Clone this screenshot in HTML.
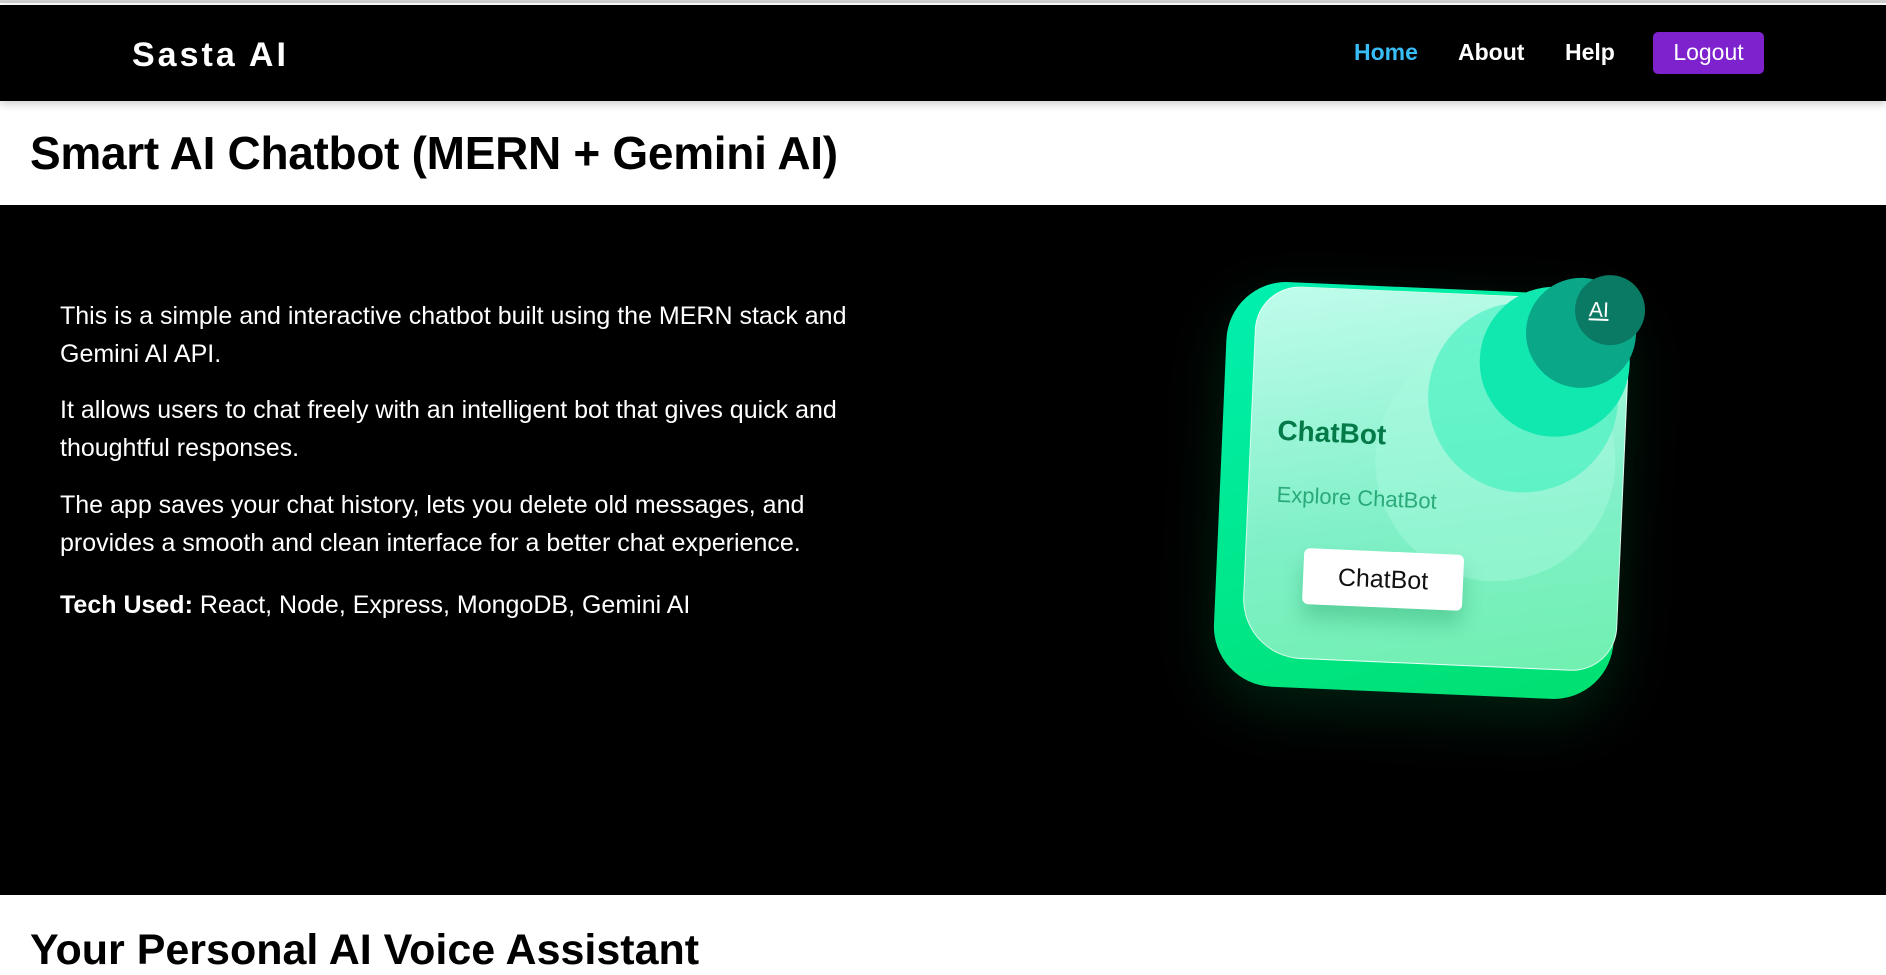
<!DOCTYPE html>
<html><head><meta charset="utf-8"><style>
*{margin:0;padding:0;box-sizing:border-box}
body{width:1886px;height:971px;overflow:hidden;background:#fff;font-family:"Liberation Sans",sans-serif;position:relative}
.topline{position:absolute;top:0;left:0;width:1886px;height:5px;background:#fff;border-top:3px solid #cfcfcf}
nav{position:absolute;top:5px;left:0;width:1886px;height:96px;background:#000;box-shadow:0 3px 8px rgba(0,0,0,.2)}
.logo{position:absolute;left:132px;top:31px;color:#fff;font-weight:bold;font-size:34px;letter-spacing:3px}
.nl{position:absolute;top:34px;font-weight:bold;font-size:23px;color:#fff}
.btn{position:absolute;left:1653px;top:27px;width:111px;height:42px;background:#7e22ce;border-radius:5px;color:#fff;font-size:23px;text-align:center;line-height:40px}
h1{position:absolute;left:30px;top:126px;font-size:46px;font-weight:bold;color:#000;white-space:nowrap;letter-spacing:-0.3px}
.dark{position:absolute;top:205px;left:0;width:1886px;height:690px;background:#000}
.txt{position:absolute;left:60px;color:#fff;font-size:25px;line-height:38px;white-space:nowrap}
h2{position:absolute;left:30px;top:926px;font-size:43px;font-weight:bold;white-space:nowrap}
.card{position:absolute;left:1220px;top:288px;width:400px;height:405px;transform:rotate(2.5deg);}
.outer{position:absolute;inset:0;border-radius:60px 30px 60px 60px;background:linear-gradient(160deg,#00f0b0,#00e070);box-shadow:0 20px 60px rgba(0,230,120,.15)}
.inner{position:absolute;left:28px;top:4px;width:375px;height:372px;border-radius:45px 20px 45px 60px;background:linear-gradient(170deg,#c0fcec,#80f0c8 60%,#70f0b0);border:1px solid rgba(255,255,255,.7)}
.c{position:absolute;border-radius:50%}
</style></head><body>
<div class="topline"></div>
<nav>
<div class="logo">Sasta AI</div>
<div class="nl" style="left:1354px;color:#38bdf8">Home</div>
<div class="nl" style="left:1458px">About</div>
<div class="nl" style="left:1565px">Help</div>
<div class="btn">Logout</div>
</nav>
<h1>Smart AI Chatbot (MERN + Gemini AI)</h1>
<div class="dark">
<div class="txt" style="top:92px">This is a simple and interactive chatbot built using the MERN stack and<br>Gemini AI API.</div>
<div class="txt" style="top:186px">It allows users to chat freely with an intelligent bot that gives quick and<br>thoughtful responses.</div>
<div class="txt" style="top:281px">The app saves your chat history, lets you delete old messages, and<br>provides a smooth and clean interface for a better chat experience.</div>
<div class="txt" style="top:381px"><b>Tech Used:</b> React, Node, Express, MongoDB, Gemini AI</div>
</div>
<div class="card">
<div class="outer"></div>
<div class="inner">
<div class="c" style="left:125px;top:45px;width:240px;height:240px;background:rgba(170,250,225,.45)"></div>
<div class="c" style="left:175px;top:5px;width:190px;height:190px;background:rgba(60,240,190,.6)"></div>
<div class="c" style="left:225px;top:-12px;width:150px;height:150px;background:#10e8b0"></div>
<div class="c" style="left:270px;top:-22px;width:110px;height:110px;background:#0aa888"></div>
<div class="c" style="left:318px;top:-26px;width:70px;height:70px;background:#0a7a64"></div>
<div style="position:absolute;left:332px;top:-2px;color:#fff;font-size:21px;text-decoration:underline">AI</div>
<div style="position:absolute;left:26px;top:128px;color:#047a48;font-size:28px;font-weight:bold">ChatBot</div>
<div style="position:absolute;left:28px;top:195px;color:#2aaa78;font-size:22px">Explore ChatBot</div>
<div style="position:absolute;left:58px;top:260px;width:160px;height:56px;background:#fff;border-radius:6px;text-align:center;line-height:56px;font-size:25px;color:#111;box-shadow:0 14px 20px rgba(0,120,60,.25)">ChatBot</div>
</div>
</div>
<h2>Your Personal AI Voice Assistant</h2>
</body></html>
